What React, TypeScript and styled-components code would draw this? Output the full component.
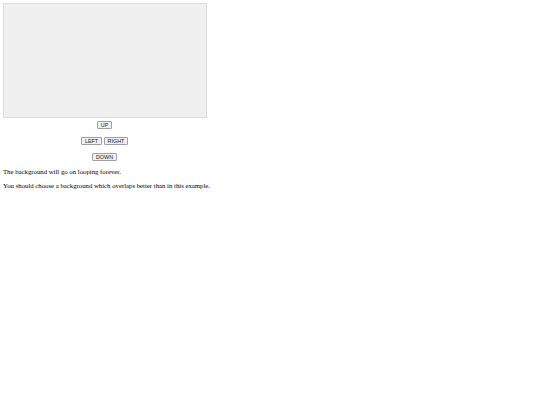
import React from "react";
import styled, { createGlobalStyle } from "styled-components";

const Global = createGlobalStyle`
  html, body {
    margin: 0;
    padding: 0;
    background: #ffffff;
  }
`;

const Page = styled.div`
  padding: 3px;
  display: flex;
  flex-direction: column;
  font-family: "Liberation Serif", "Times New Roman", serif;
  color: #000;
`;

const Stage = styled.div`
  box-sizing: border-box;
  width: 204px;
  height: 115px;
  background: #f0f0f0;
  border: 1px solid #dcdcdc;
`;

const Pad = styled.div`
  width: 203px;
  margin-top: 3px;
  display: flex;
  flex-direction: column;
  align-items: center;
  gap: 8px;
`;

const PadRow = styled.div`
  display: flex;
  gap: 2px;
`;

const Key = styled.button<{ $w: number }>`
  box-sizing: border-box;
  width: ${(p) => p.$w}px;
  height: 8px;
  padding: 0;
  margin: 0;
  border: 1px solid #a0a0a0;
  border-radius: 1px;
  background: #efefef;
  color: #222;
  font-family: "Liberation Sans", Arial, sans-serif;
  font-size: 5.4px;
  line-height: 6px;
  text-align: center;
`;

const Notes = styled.div`
  margin-top: 7px;
  display: flex;
  flex-direction: column;
  gap: 5.7px;
`;

const Note = styled.p`
  margin: 0;
  font-size: 6.75px;
  line-height: 8px;
`;

export default function App() {
  return (
    <>
      <Global />
      <Page>
        <Stage />
        <Pad>
          <PadRow>
            <Key $w={15}>UP</Key>
          </PadRow>
          <PadRow>
            <Key $w={21}>LEFT</Key>
            <Key $w={24}>RIGHT</Key>
          </PadRow>
          <PadRow>
            <Key $w={25}>DOWN</Key>
          </PadRow>
        </Pad>
        <Notes>
          <Note>The background will go on looping forever.</Note>
          <Note>You should choose a background which overlaps better than in this example.</Note>
        </Notes>
      </Page>
    </>
  );
}
